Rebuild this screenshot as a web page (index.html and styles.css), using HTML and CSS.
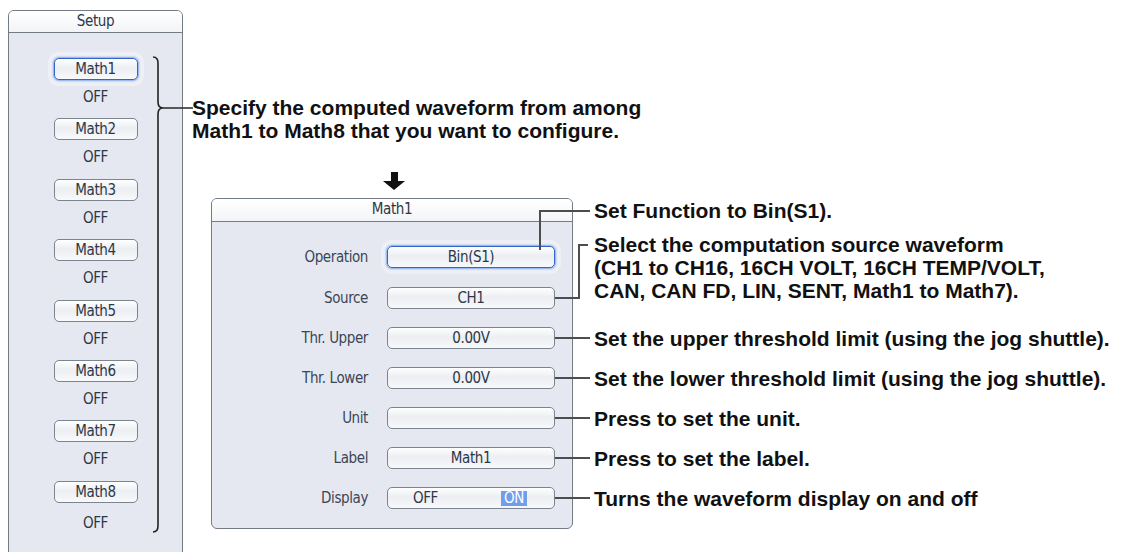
FILE: index.html
```html
<!DOCTYPE html>
<html lang="en">
<head>
    <meta charset="UTF-8">
    <meta name="viewport" content="width=device-width, initial-scale=1.0">
    <title>Math Setup</title>
    <link rel="stylesheet" href="styles.css">
</head>
<body>
    <div class="page">
        <aside class="setup">
            <div class="panel-title">Setup</div>
            <ul class="math-list">
                <li class="math-item"><span class="key selected">Math1</span><span class="state">OFF</span></li>
                <li class="math-item"><span class="key">Math2</span><span class="state">OFF</span></li>
                <li class="math-item"><span class="key">Math3</span><span class="state">OFF</span></li>
                <li class="math-item"><span class="key">Math4</span><span class="state">OFF</span></li>
                <li class="math-item"><span class="key">Math5</span><span class="state">OFF</span></li>
                <li class="math-item"><span class="key">Math6</span><span class="state">OFF</span></li>
                <li class="math-item"><span class="key">Math7</span><span class="state">OFF</span></li>
                <li class="math-item last"><span class="key">Math8</span><span class="state">OFF</span></li>
            </ul>
            <svg class="brace" width="46" height="482" viewBox="0 0 46 482">
                <path d="M3 2 Q8 2 8 8 L8 47 Q8 53 13 53 Q8 53 8 59 L8 471 Q8 477 3 477" fill="none" stroke="#222" stroke-width="1.6"/>
                <path d="M13 53 L43 53" stroke="#333" stroke-width="1.6"/>
            </svg>
        </aside>

        <main class="detail">
            <p class="pick-note">Specify the computed waveform from among<br>Math1 to Math8 that you want to configure.</p>
            <svg class="down-arrow" width="22" height="18" viewBox="0 0 22 18">
                <path d="M8 0 H15 V9 H22 L11 18 L0 9 H8 Z" fill="#111"/>
            </svg>

            <section class="math-panel">
                <div class="panel-title">Math1</div>
                <div class="rows">
                    <div class="row first">
                        <span class="row-label">Operation</span>
                        <span class="field selected">Bin(S1)</span>
                        <span class="callout-up"><span class="note">Set Function to Bin(S1).</span></span>
                    </div>
                    <div class="row">
                        <span class="row-label">Source</span>
                        <span class="field">CH1</span>
                        <span class="tie"></span>
                        <span class="elbow"><span class="note multi">Select the computation source waveform<br>(CH1 to CH16, 16CH VOLT, 16CH TEMP/VOLT,<br>CAN, CAN FD, LIN, SENT, Math1 to Math7).</span></span>
                    </div>
                    <div class="row">
                        <span class="row-label">Thr. Upper</span>
                        <span class="field">0.00V</span>
                        <span class="leader"></span>
                        <span class="note">Set the upper threshold limit (using the jog shuttle).</span>
                    </div>
                    <div class="row">
                        <span class="row-label">Thr. Lower</span>
                        <span class="field">0.00V</span>
                        <span class="leader"></span>
                        <span class="note">Set the lower threshold limit (using the jog shuttle).</span>
                    </div>
                    <div class="row">
                        <span class="row-label">Unit</span>
                        <span class="field"></span>
                        <span class="leader"></span>
                        <span class="note">Press to set the unit.</span>
                    </div>
                    <div class="row">
                        <span class="row-label">Label</span>
                        <span class="field">Math1</span>
                        <span class="leader"></span>
                        <span class="note">Press to set the label.</span>
                    </div>
                    <div class="row">
                        <span class="row-label">Display</span>
                        <span class="field toggle"><span class="opt">OFF</span><span class="opt on">ON</span></span>
                        <span class="leader"></span>
                        <span class="note">Turns the waveform display on and off</span>
                    </div>
                </div>
            </section>
        </main>
    </div>
</body>
</html>
```

FILE: styles.css
```css
body {
    margin: 0;
    background: #fff;
    font-family: "DejaVu Sans Condensed", "DejaVu Sans", sans-serif;
    font-size: 15px;
    letter-spacing: -0.4px;
    color: #2b3848;
}
.page {
    display: flex;
    align-items: flex-start;
    height: 552px;
    overflow: hidden;
}

/* shared panel look */
.setup, .math-panel {
    box-sizing: border-box;
    border: 1px solid #737b87;
    background: #e5e8f0;
}
.panel-title {
    height: 21px;
    line-height: 21px;
    text-align: center;
    border-bottom: 1px solid #737b87;
    background: linear-gradient(#ffffff, #f3f4f7);
    border-radius: 5px 5px 0 0;
    color: #2b3848;
}
.key, .field {
    box-sizing: border-box;
    height: 22px;
    border: 1px solid #7c848f;
    border-radius: 5px;
    background: linear-gradient(#ffffff 0%, #eceef2 45%, #f8f9fb 100%);
    display: flex;
    align-items: center;
    justify-content: center;
    flex-shrink: 0;
}
.selected {
    border-color: #3565c9;
    box-shadow: 0 0 2px 1px #7fa6ee, 0 0 0 6px #eef0f5;
}

/* left setup column */
.setup {
    position: relative;
    width: 175px;
    height: 580px;
    margin: 10px 0 0 8px;
    border-radius: 6px 6px 0 0;
    flex-shrink: 0;
}
.math-list {
    list-style: none;
    margin: 0;
    padding: 25px 0 0;
    display: flex;
    flex-direction: column;
    align-items: center;
    gap: 10.4px;
}
.math-item {
    display: flex;
    flex-direction: column;
    align-items: center;
}
.math-item .key { width: 84px; }
.state {
    margin-top: 6px;
    line-height: 22px;
}
.math-item.last .state { margin-top: 9px; }
.brace {
    position: absolute;
    left: 141px;
    top: 44px;
    overflow: visible;
}

/* right side */
.detail {
    padding: 96px 0 0 9px;
    display: flex;
    flex-direction: column;
    align-items: flex-start;
}
.pick-note, .note {
    font-family: "Liberation Sans", Arial, sans-serif;
    font-weight: bold;
    font-size: 21px;
    letter-spacing: 0;
    color: #111;
}
.pick-note {
    margin: 0;
    line-height: 23px;
}
.down-arrow {
    margin: 30px 0 0 191px;
    display: block;
}
.math-panel {
    width: 362px;
    height: 331px;
    margin: 8px 0 0 19px;
    border-radius: 6px;
}
.math-panel .panel-title { height: 22px; line-height: 20px; }
.rows {
    padding-top: 24px;
    display: flex;
    flex-direction: column;
    gap: 18px;
}
.row {
    position: relative;
    display: flex;
    align-items: center;
    width: 360px;
    height: 22px;
}
.row.first { margin-bottom: 1px; }
.row-label {
    width: 156px;
    text-align: right;
    flex-shrink: 0;
    color: #3a4656;
}
.field {
    margin-left: 19px;
    width: 168px;
}
.leader {
    width: 35px;
    border-top: 2px solid #4d4d4d;
    flex-shrink: 0;
}
.note {
    margin-left: 4px;
    white-space: nowrap;
    line-height: 23px;
}

/* callouts that bend away from their row */
.callout-up {
    position: absolute;
    left: 327px;
    bottom: 18px;
    width: 49px;
    height: 38px;
    border-left: 2px solid #4d4d4d;
    border-top: 2px solid #4d4d4d;
}
.callout-up .note {
    position: absolute;
    left: 49px;
    top: -13px;
}
.tie {
    position: absolute;
    left: 343px;
    top: 10px;
    width: 23px;
    border-top: 2px solid #4d4d4d;
}
.elbow {
    position: absolute;
    left: 366px;
    top: -43px;
    width: 8px;
    height: 53px;
    border-left: 2px solid #4d4d4d;
    border-top: 2px solid #4d4d4d;
}
.elbow .note {
    position: absolute;
    left: 10px;
    top: -13px;
}

.toggle {
    justify-content: flex-start;
}
.opt { margin-left: 25px; }
.opt.on {
    margin-left: auto;
    margin-right: 27px;
    background: #6e9eec;
    color: #fff;
    padding: 0 3px;
    line-height: 15px;
}
```
